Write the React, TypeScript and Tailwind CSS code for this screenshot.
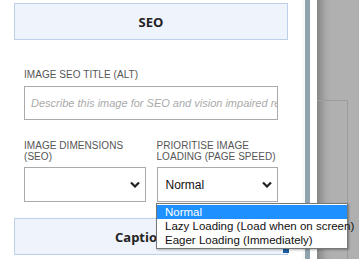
const options = [
  "Normal",
  "Lazy Loading (Load when on screen)",
  "Eager Loading (Immediately)",
];

function SectionHead({ title, className = "" }: { title: string; className?: string }) {
  return (
    <div
      className={
        "h-[37px] mx-[14px] flex items-center border border-[#bcd0ea] bg-[#eef3fc] pt-[2px] text-[13px] font-bold text-[#222] font-['Open_Sans',sans-serif] " +
        className
      }
    >
      {title}
    </div>
  );
}

function Chevron() {
  return (
    <svg width="10" height="7" viewBox="0 0 10 7" className="text-[#222]">
      <path d="M1 1.5 L5 5.5 L9 1.5" fill="none" stroke="currentColor" strokeWidth="2.2" />
    </svg>
  );
}

function SelectBox({ value }: { value?: string }) {
  return (
    <div className="h-[35px] flex items-center justify-between pl-[8px] pr-[5px] border border-[#aaa] bg-white text-[12px] text-[#111]">
      <span>{value ?? ""}</span>
      <Chevron />
    </div>
  );
}

export default function App() {
  return (
    <div className="relative w-[359px] h-[259px] overflow-hidden flex font-['Liberation_Sans',Arial,sans-serif]">
      <div className="w-[302px] bg-white pt-[3px]">
        <SectionHead title="SEO" className="justify-center" />

        <div className="px-[24px] pt-[29px]">
          <label className="block text-[10px] leading-[12px] tracking-[0.05px] text-[#555] uppercase mb-[5px]">
            Image SEO Title (Alt)
          </label>
          <div className="h-[34px] flex items-center px-[6px] border border-[#aaa] overflow-hidden whitespace-nowrap text-[11px] italic text-[#aaa]">
            Describe this image for SEO and vision impaired readers
          </div>

          <div className="grid grid-cols-2 gap-[11px] mt-[20px]">
            <div>
              <label className="block mb-[5px] text-[10px] leading-[11px] tracking-[0.05px] text-[#555] uppercase whitespace-nowrap">
                Image Dimensions
                <br />
                (SEO)
              </label>
              <SelectBox />
            </div>
            <div>
              <label className="block mb-[5px] text-[10px] leading-[11px] tracking-[0.05px] text-[#555] uppercase whitespace-nowrap">
                Prioritise Image
                <br />
                Loading (Page Speed)
              </label>
              <SelectBox value="Normal" />
            </div>
          </div>
        </div>

        <div className="mt-[16px]">
          <SectionHead title="Caption" className="pl-[100px]" />
        </div>
      </div>

      <div className="w-[3px] bg-[#f8f9fb]" />
      <div className="w-[5px] bg-[#8fa3ad]" />
      <div className="w-[7px] bg-white" />
      <div className="flex-1 bg-[linear-gradient(to_right,#868686_0px,#a9a9a9_9px,#b0b0b0_14px)]">
        <div className="mt-[100px] w-[31px] h-[170px] border-t border-r border-[#9c9c9c]" />
      </div>

      <div className="absolute left-[283px] top-[247px] w-[6px] h-[6px] bg-[#1d5fa6]" />

      <div className="absolute left-[156px] top-[203px] w-[192px] border border-[#777] bg-white py-[1px] shadow-[1px_1px_2px_rgba(0,0,0,0.3)] text-[11.5px] leading-[14px] text-[#111] whitespace-nowrap">
        {options.map((o, i) => (
          <div
            key={o}
            className={i === 0 ? "pl-[8px] bg-[#1e90ff] text-white" : "pl-[8px]"}
          >
            {o}
          </div>
        ))}
      </div>
    </div>
  );
}
